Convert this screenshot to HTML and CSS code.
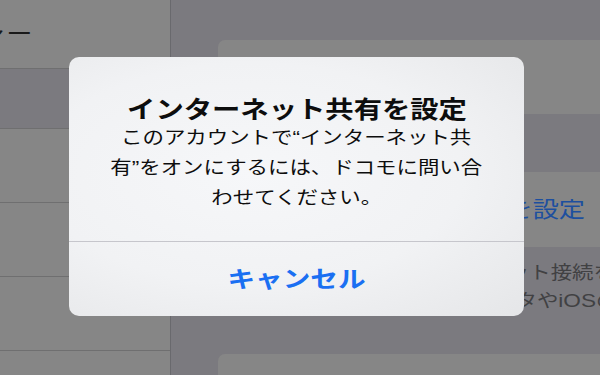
FILE: index.html
```html
<!DOCTYPE html>
<html lang="ja">
<head>
<meta charset="utf-8">
<link rel="stylesheet" href="styles.css">
</head>
<body>
<div class="screen">
  <aside class="sidebar">
    <div class="nav"><span class="nav-title wide">ャー</span></div>
    <div class="gap"></div>
    <div class="row"></div>
    <div class="row"></div>
    <div class="row"></div>
  </aside>
  <main class="main">
    <div class="card card1"></div>
    <div class="section-gap"></div>
    <div class="card card2"><span class="link wide">インターネット共有を設定</span></div>
    <div class="footer">
      <div class="fline"><span class="wide">ほかのデバイスとインターネット接続を共有</span></div>
      <div class="fline fline2"><span class="wide">共有するには、モバイルデータや<span class="latin">iOS</span>のバージョン</span></div>
    </div>
    <div class="card card3"></div>
  </main>
</div>
<div class="alert">
  <div class="alert-body">
    <div class="title"><span class="wide">インターネット共有を設定</span></div>
    <div class="msg"><span class="wide">このアカウントで<span class="q">“</span>インターネット共</span></div>
    <div class="msg"><span class="wide">有<span class="q">”</span>をオンにするには、ドコモに問い合</span></div>
    <div class="msg"><span class="wide">わせてください。</span></div>
  </div>
  <div class="alert-btn"><span class="wide">キャンセル</span></div>
</div>
</body>
</html>
```
FILE: styles.css
```css
* { box-sizing: border-box; }
html, body { margin: 0; padding: 0; }
body {
  width: 600px;
  height: 375px;
  overflow: hidden;
  position: relative;
  font-family: "Noto Sans CJK JP", "Noto Sans", sans-serif;
  background: #7b7a7f;
}
.wide {
  display: inline-block;
  white-space: nowrap;
  transform: scaleX(1.19);
}
.screen {
  display: flex;
  width: 600px;
  height: 375px;
}
.sidebar {
  width: 171px;
  flex: none;
  background: #868686;
  border-right: 1px solid #69696d;
  overflow: hidden;
}
.nav {
  height: 69px;
  border-bottom: 1px solid #6f6f70;
  display: flex;
  align-items: flex-start;
  padding-top: 15px;
}
.nav-title {
  font-size: 22px;
  line-height: 32px;
  color: #1a1a1a;
  margin-left: -20px;
  transform-origin: left center;
}
.gap {
  height: 60px;
  background: #7b7a7f;
  border-bottom: 1px solid #6f6f70;
}
.row {
  height: 74px;
  border-bottom: 1px solid #6f6f70;
}
.main {
  flex: 1;
  padding: 40px 0 0 47px;
  display: flex;
  flex-direction: column;
  overflow: hidden;
}
.card {
  background: #868686;
  border-radius: 7px 0 0 7px;
  flex: none;
}
.card1 { height: 74px; }
.section-gap { height: 58px; flex: none; }
.card2 {
  height: 75px;
  display: flex;
  align-items: center;
  justify-content: flex-end;
  padding-right: 15px;
}
.link {
  font-size: 22px;
  color: #1d4f9f;
  transform-origin: right center;
  line-height: 30px;
  margin-top: -5px;
}
.footer {
  height: 107px;
  flex: none;
  padding: 10px 0 0 12px;
  color: #414143;
  font-size: 18px;
  line-height: 28px;
}
.fline span { transform-origin: left center; }
.fline2 { padding-left: 7px; }
.latin { font-family: "Liberation Sans", sans-serif; font-size: 19px; }
.card3 { height: 60px; }

.alert {
  position: absolute;
  left: 69px;
  top: 57px;
  width: 455px;
  height: 259px;
  border-radius: 10px;
  background: radial-gradient(ellipse at 40% 45%, #f6f7f9 0%, #f1f2f4 55%, #e5e6e8 100%);
  display: flex;
  flex-direction: column;
  overflow: hidden;
}
.alert-body {
  height: 185px;
  flex: none;
  border-bottom: 1px solid #c6c6cc;
  padding-top: 37px;
  text-align: center;
  color: #0d0d0d;
}
.title {
  font-size: 24px;
  font-weight: 700;
  line-height: 28px;
}
.title .wide { transform: scaleX(1.18); }
.msg {
  font-size: 18px;
  line-height: 28px;
}
.q {
  font-family: "Liberation Sans", sans-serif;
  font-size: 19px;
}
.alert-btn {
  flex: 1;
  display: flex;
  align-items: center;
  justify-content: center;
  color: #1a6ff2;
  font-size: 23px;
  font-weight: 700;
  padding-bottom: 4px;
}
.alert-btn .wide { transform: scaleX(1.2); }
```
